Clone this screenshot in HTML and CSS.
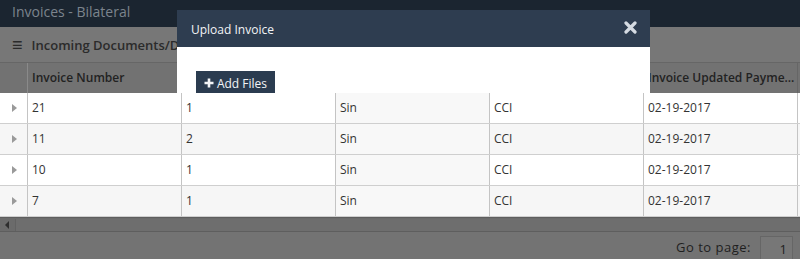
FILE: index.html
```html
<!DOCTYPE html>
<html>
<head>
<meta charset="utf-8">
<link rel="stylesheet" href="styles.css">
</head>
<body>
<div class="page">
  <header class="topbar">Invoices - Bilateral</header>
  <div class="toolbar"><span class="burger">&#8801;</span><span class="crumb">Incoming Documents/Da</span></div>
  <div class="grid">
    <div class="grid-head">
      <div class="cell exp"></div>
      <div class="cell">Invoice Number</div>
      <div class="cell"></div>
      <div class="cell"></div>
      <div class="cell"></div>
      <div class="cell">Invoice Updated Payme...</div>
      <div class="cell tail"></div>
    </div>
    <div class="grid-body">
      <div class="row">
        <div class="cell exp"><span class="tri"></span></div>
        <div class="cell">21</div><div class="cell">1</div><div class="cell sorted">Sin</div><div class="cell">CCI</div><div class="cell">02-19-2017</div><div class="cell tail"></div>
      </div>
      <div class="row alt">
        <div class="cell exp"><span class="tri"></span></div>
        <div class="cell">11</div><div class="cell">2</div><div class="cell sorted">Sin</div><div class="cell">CCI</div><div class="cell">02-19-2017</div><div class="cell tail"></div>
      </div>
      <div class="row">
        <div class="cell exp"><span class="tri"></span></div>
        <div class="cell">10</div><div class="cell">1</div><div class="cell sorted">Sin</div><div class="cell">CCI</div><div class="cell">02-19-2017</div><div class="cell tail"></div>
      </div>
      <div class="row alt">
        <div class="cell exp"><span class="tri"></span></div>
        <div class="cell">7</div><div class="cell">1</div><div class="cell sorted">Sin</div><div class="cell">CCI</div><div class="cell">02-19-2017</div><div class="cell tail"></div>
      </div>
    </div>
    <div class="hscroll"><span class="larrow"></span><span class="track"></span></div>
  </div>
  <footer class="pager">
    <span class="goto">Go to page:</span>
    <span class="pagebox">1</span>
  </footer>

  <div class="modal">
    <div class="modal-head">
      <span class="modal-title">Upload Invoice</span>
      <svg class="close" width="13" height="13" viewBox="0 0 13 13"><path d="M2 2 L11 11 M11 2 L2 11" stroke="#d5dbe2" stroke-width="3.2" stroke-linecap="round"/></svg>
    </div>
    <div class="modal-body">
      <button class="addbtn"><svg class="plus" width="10" height="10" viewBox="0 0 10 10"><path d="M5 0.5 V9.5 M0.5 5 H9.5" stroke="#f3f5f7" stroke-width="2.6"/></svg><span>Add Files</span></button>
    </div>
  </div>
</div>
</body>
</html>
```

FILE: styles.css
```css
html, body {
  margin: 0;
  padding: 0;
}
body {
  width: 800px;
  height: 259px;
  overflow: hidden;
  background: #737373;
  font-family: "Open Sans", "Noto Sans", sans-serif;
}
.page {
  position: relative;
  width: 800px;
  height: 259px;
  display: flex;
  flex-direction: column;
}
.topbar {
  height: 27px;
  background: #1b2530;
  color: #7c848d;
  font-size: 14px;
  line-height: 24px;
  padding-left: 12px;
  box-sizing: border-box;
  flex: none;
}
.toolbar {
  height: 35px;
  background: #777777;
  display: flex;
  align-items: center;
  padding-left: 12px;
  color: #2b2b2b;
  font-size: 13px;
  font-weight: 600;
  box-sizing: border-box;
  flex: none;
  white-space: nowrap;
  overflow: hidden;
}
.burger {
  font-size: 18px;
  font-weight: 700;
  margin-right: 9px;
  line-height: 1;
  margin-top: -2px;
}
.grid {
  flex: none;
  display: flex;
  flex-direction: column;
}
.grid-head {
  height: 31px;
  display: flex;
  background: #727272;
  border-top: 1px solid #666;
  box-sizing: border-box;
  font-size: 12px;
  font-weight: 600;
  color: #222;
}
.grid-head .cell {
  line-height: 29px;
  border-right: 1px solid #666;
}
.grid-head .cell.exp {
  border-right: 1px solid #8a8a8a;
}
.cell {
  width: 154px;
  box-sizing: border-box;
  padding-left: 4px;
  white-space: nowrap;
  overflow: hidden;
  flex: none;
}
.cell.exp {
  width: 28px;
  padding: 0;
  display: flex;
  align-items: center;
  justify-content: center;
}
.cell.tail {
  width: 3px;
  padding: 0;
  border-right: none;
}
.grid-body {
  position: relative;
  z-index: 2;
}
.row {
  height: 31px;
  display: flex;
  background: #fff;
  border-bottom: 1px solid #cfcfcf;
  box-sizing: border-box;
  font-size: 12px;
  color: #333;
}
.row .cell {
  line-height: 30px;
  border-right: 1px solid #c4c4c4;
}
.row .cell.exp {
  border-right: 1px solid #c4c4c4;
}
.row .cell.tail {
  border-right: none;
}
.row.alt {
  background: #f6f6f6;
}
.row .cell.sorted {
  background: #f8f8f8;
}
.tri {
  width: 0;
  height: 0;
  border-top: 4px solid transparent;
  border-bottom: 4px solid transparent;
  border-left: 5px solid #9a9a9a;
  margin-left: 2px;
}
.hscroll {
  position: relative;
  z-index: 2;
  height: 15px;
  background: #6b6b6b;
  border-top: 1px solid #5e5e5e;
  border-bottom: 1px solid #5e5e5e;
  box-sizing: border-box;
  display: flex;
  align-items: center;
}
.larrow {
  width: 0;
  height: 0;
  border-top: 4px solid transparent;
  border-bottom: 4px solid transparent;
  border-right: 4px solid #2e2e2e;
  margin-left: 5px;
}
.track {
  flex: 1;
  height: 12px;
  margin-left: 6px;
  background: #6e6e6e;
  border-left: 1px solid #626262;
}
.pager {
  flex: 1;
  background: #737373;
  display: flex;
  justify-content: flex-end;
  align-items: flex-end;
  padding-right: 7px;
  font-size: 13px;
  color: #1f1f1f;
}
.goto {
  margin-right: 9px;
  margin-bottom: 3px;
  letter-spacing: 0.5px;
}
.pagebox {
  width: 33px;
  height: 23px;
  box-sizing: border-box;
  border: 1px solid #666;
  border-bottom: none;
  background: #777;
  text-align: right;
  padding-right: 5px;
  line-height: 24px;
}
.modal {
  position: absolute;
  left: 177px;
  top: 10px;
  width: 473px;
  z-index: 1;
  background: #fff;
}
.modal-head {
  height: 37px;
  background: #2e3d50;
  display: flex;
  align-items: center;
  justify-content: space-between;
  padding: 0 13px 0 14px;
  box-sizing: border-box;
}
.modal-title {
  color: #f2f4f6;
  font-size: 12px;
  margin-top: 1px;
}
.close {
  display: block;
  margin-top: -2px;
}
.modal-body {
  height: 60px;
  padding: 24px 0 0 19px;
  box-sizing: border-box;
}
.addbtn {
  background: #2b3c50;
  color: #f3f5f7;
  border: none;
  font-family: "Open Sans", "Noto Sans", sans-serif;
  font-size: 12px;
  height: 24px;
  width: 79px;
  padding: 0;
  display: flex;
  align-items: center;
  justify-content: center;
  gap: 3px;
  border-radius: 0;
}
.plus {
  display: block;
}
```
